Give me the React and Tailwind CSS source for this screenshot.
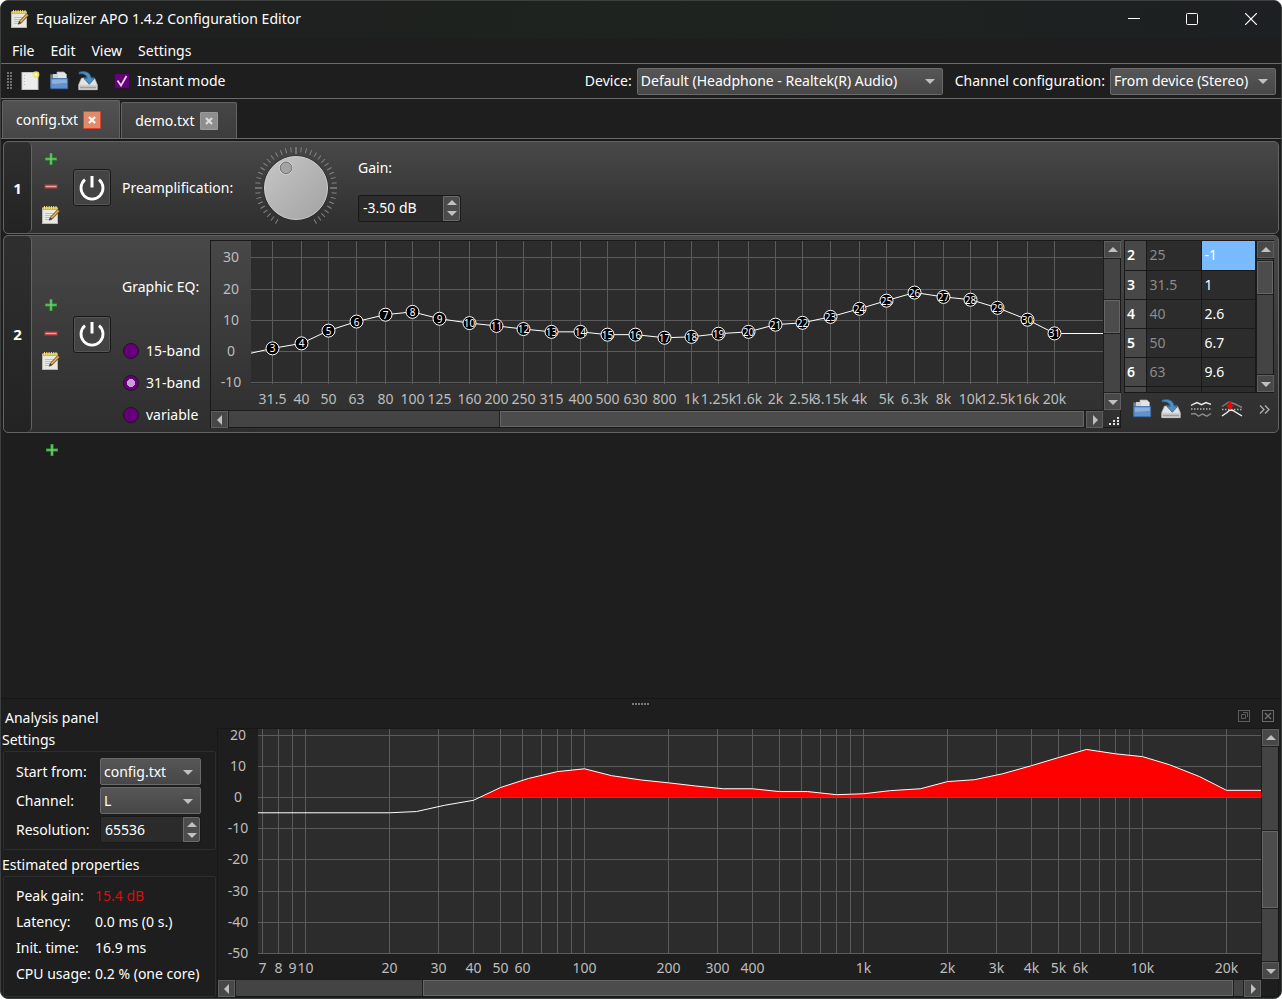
import React, { useState } from 'react';
import clsx from 'clsx';

const BANDS = [
  { n: 1, f: 20, g: -1.4 },
  { n: 2, f: 25, g: -1 },
  { n: 3, f: 31.5, g: 1, label: '31.5' },
  { n: 4, f: 40, g: 2.6, label: '40' },
  { n: 5, f: 50, g: 6.7, label: '50' },
  { n: 6, f: 63, g: 9.6, label: '63' },
  { n: 7, f: 80, g: 11.8, label: '80' },
  { n: 8, f: 100, g: 12.7, label: '100' },
  { n: 9, f: 125, g: 10.5, label: '125' },
  { n: 10, f: 160, g: 9.1, label: '160' },
  { n: 11, f: 200, g: 8.2, label: '200' },
  { n: 12, f: 250, g: 7.2, label: '250' },
  { n: 13, f: 315, g: 6.3, label: '315' },
  { n: 14, f: 400, g: 6.3, label: '400' },
  { n: 15, f: 500, g: 5.4, label: '500' },
  { n: 16, f: 630, g: 5.4, label: '630' },
  { n: 17, f: 800, g: 4.4, label: '800' },
  { n: 18, f: 1000, g: 4.7, label: '1k' },
  { n: 19, f: 1250, g: 5.7, label: '1.25k' },
  { n: 20, f: 1600, g: 6.3, label: '1.6k' },
  { n: 21, f: 2000, g: 8.6, label: '2k' },
  { n: 22, f: 2500, g: 9.2, label: '2.5k' },
  { n: 23, f: 3150, g: 11.1, label: '3.15k' },
  { n: 24, f: 4000, g: 13.7, label: '4k' },
  { n: 25, f: 5000, g: 16.3, label: '5k' },
  { n: 26, f: 6300, g: 18.9, label: '6.3k' },
  { n: 27, f: 8000, g: 17.5, label: '8k' },
  { n: 28, f: 10000, g: 16.6, label: '10k' },
  { n: 29, f: 12500, g: 14, label: '12.5k' },
  { n: 30, f: 16000, g: 10.2, label: '16k' },
  { n: 31, f: 20000, g: 5.8, label: '20k' },
];

const PREAMP = -3.5;

function NotepadIcon() {
  return (
    <svg width="18" height="18" viewBox="0 0 18 18">
      <rect x="0.5" y="2" width="15" height="15.5" fill="#e9e9e4" stroke="#b9b9b2" />
      <path d="M3 7.5h9M3 9.5h8M3 11.5h7M3 13.5h6" stroke="#b4b4b4" strokeWidth="0.8" />
      <rect x="1" y="1" width="14" height="3" fill="#d9b93a" />
      <path d="M2.5 0v3M4.8 0v3M7.1 0v3M9.4 0v3M11.7 0v3M14 0v3" stroke="#f6e27a" strokeWidth="1" />
      <path d="M7.2 14.2 8.4 11.2 15.6 3.6 17.6 5.4 10.3 13z" fill="#c08a3e" stroke="#6b4a1c" strokeWidth="0.7" />
      <path d="M7.2 14.2 8.4 11.2 10.3 13z" fill="#4a3a25" />
      <path d="M9.5 11.8 16.3 4.5" stroke="#ecc27a" strokeWidth="0.9" />
    </svg>
  );
}

function NewFileIcon() {
  return (
    <svg width="20" height="20" viewBox="0 0 20 20">
      <rect x="2" y="1.5" width="16" height="17" fill="#ececec" stroke="#c4c4c4" />
      <path d="M4.5 4v12" stroke="#bdbdbd" strokeDasharray="1 2" />
      <circle cx="16" cy="3.6" r="3.4" fill="#f0e75c" opacity="0.85" />
      <circle cx="16" cy="3.6" r="1.4" fill="#fffbd0" />
    </svg>
  );
}

function FolderIcon() {
  return (
    <svg width="20" height="20" viewBox="0 0 20 20">
      <path d="M1.500 16V3.500h5l1 1.500h9.500v11z" fill="#75808f" stroke="#56606c" strokeWidth="0.8" />
      <path d="M8 1h7l2.500 2.500V9H8z" fill="#e4e4e4" stroke="#a9a9a9" strokeWidth="0.7" />
      <path d="M4 3h5v6H4z" fill="#cfd2d6" />
      <path d="M1.800 17.700V7.600h16.900v10.100z" fill="#6391ca" stroke="#3b6aa8" strokeWidth="0.9" />
      <path d="M2.800 8.600h15v3.400C13 11.500 8 13 2.800 12.800z" fill="#8bb2de" />
    </svg>
  );
}

function SaveIcon() {
  return (
    <svg width="20" height="20" viewBox="0 0 20 20">
      <path d="M3.500 7h13l2.800 6.500v5.200H.7v-5.200z" fill="#e3e3e3" stroke="#a8a8a8" strokeWidth="0.7" />
      <path d="M.8 13.800h18.400v4.900H.8z" fill="#cfcfcf" />
      <path d="M2.500 16.500h15" stroke="#6d6d6d" strokeWidth="1.600" strokeDasharray="1 1" />
      <path d="M1 1.300C6-.5 12.500.5 13.200 7.500h3.300l-5.200 5.800-5.300-5.800h3.200C9 4 5.500 2.200 1 3z" fill="#4f8fc0" stroke="#2a5f8c" strokeWidth="0.8" />
    </svg>
  );
}

function PlusIcon() {
  return (
    <svg width="14" height="14" viewBox="0 0 14 14">
      <path d="M5.500 1h3v4.500H13v3H8.500V13h-3V8.500H1v-3h4.500z" fill="#2f9a33" />
      <path d="M7 1.700v10.600M1.700 7h10.600" stroke="#7fd67c" strokeWidth="1.200" />
    </svg>
  );
}

function MinusIcon() {
  return (
    <svg width="14" height="5" viewBox="0 0 14 5">
      <rect x="0.500" y="0.500" width="13" height="4" fill="#b23c3c" />
      <path d="M1.500 2.500h11" stroke="#eba3a0" strokeWidth="1.400" />
    </svg>
  );
}

function PowerIcon() {
  return (
    <svg width="26" height="26" viewBox="0 0 26 26" fill="none" stroke="#fff" strokeWidth="2.800">
      <path d="M6 4.600a11 11 0 1 0 14 0" />
      <path d="M13 1v11.500" strokeWidth="3" />
    </svg>
  );
}

function CurvesIcon() {
  return (
    <svg width="22" height="18" viewBox="0 0 22 18" fill="none" strokeWidth="1.400">
      <path d="M1 5.500 3.500 4 7 2.500l4.500 2.200L16 2.500l5 1.800" stroke="#f0f0f0" />
      <path d="M1 9h20" stroke="#b0b0b0" strokeDasharray="1.500 1.500" />
      <path d="M1 14 5 13.500l3.500 2.700 4-2.200 4.500 2.200L21 13.500" stroke="#8a8a8a" />
    </svg>
  );
}

function NormalizeIcon() {
  return (
    <svg width="22" height="18" viewBox="0 0 22 18" fill="none" strokeWidth="1.400">
      <path d="M1 6.500 8 2l6 2 7 3.500" stroke="#808080" />
      <path d="M1 9.500h20" stroke="#b0b0b0" strokeDasharray="1.500 1.500" />
      <path d="M1 16 6 12.500l3-2.500 3 .5 4 2.500 5 3" stroke="#f5f5f5" />
      <path d="M7.500 1h3v4h2.500L9 10 5 5h2.500z" fill="#f00" />
    </svg>
  );
}

function Arrow({ dir }) {
  const d = {
    up: 'M0 7 5 2l5 5z',
    down: 'M0 3 5 8l5-5z',
    left: 'M7 0 2 5l5 5z',
    right: 'M3 0 8 5l-5 5z',
  }[dir];
  return (
    <svg width="10" height="10" viewBox="0 0 10 10">
      <path d={d} fill="#c0c0c0" />
    </svg>
  );
}

function ScrollButton({ dir }) {
  return (
    <button
      aria-label={`Scroll ${dir}`}
      className="flex h-[17px] w-[17px] shrink-0 items-center justify-center border border-[#5e5e5e] bg-[#484848]"
    >
      <Arrow dir={dir} />
    </button>
  );
}

function ScrollBar({ vertical, before, thumb, after, className }) {
  const seps = vertical ? 'border-y' : 'border-x';
  return (
    <div className={clsx('flex shrink-0 bg-[#444]', vertical ? 'w-[17px] flex-col border-l border-[#1c1c1c]' : 'h-[17px] border-t border-[#1c1c1c]', className)}>
      <ScrollButton dir={vertical ? 'up' : 'left'} />
      <div className={clsx('flex min-h-0 min-w-0 flex-1 border-[#202020]', vertical ? 'flex-col' : '', seps)}>
        <div style={{ flex: `${before} 1 0` }} />
        <div className={clsx('flex border-[#202020]', seps)} style={{ flex: `${thumb} 1 0` }}>
          <div className="flex-1 border border-[#666] bg-[#4c4c4c]" />
        </div>
        <div style={{ flex: `${after} 1 0` }} />
      </div>
      <ScrollButton dir={vertical ? 'down' : 'right'} />
    </div>
  );
}

function Combo({ id, value, className }) {
  return (
    <div className={clsx('relative h-[27px]', className)}>
      <select
        id={id}
        className="h-full w-full appearance-none rounded-[2px] border border-[#6a6a6a] bg-linear-to-b from-[#565656] to-[#474747] pl-[3px] pr-4 text-sm leading-5 text-white outline-none"
      >
        <option>{value}</option>
      </select>
      <span className="pointer-events-none absolute inset-y-0 right-2 flex items-center">
        <Arrow dir="down" />
      </span>
    </div>
  );
}

function Spin({ id, value, className }) {
  return (
    <div className={clsx('flex h-[27px] rounded-[2px] border border-[#191919] bg-[#2b2b2b]', className)}>
      <input id={id} defaultValue={value} className="min-w-0 flex-1 bg-transparent pl-1 text-sm leading-5 text-white outline-none" />
      <div className="flex w-[17px] flex-col items-center justify-center rounded-r-[2px] border border-[#6a6a6a] bg-[#4c4c4c]">
        <button aria-label="Increase"><Arrow dir="up" /></button>
        <button aria-label="Decrease"><Arrow dir="down" /></button>
      </div>
    </div>
  );
}

function Dial({ value }) {
  const ticks = Array.from({ length: 41 }, (_, i) => i - 20);
  const a = (value * 7.5 * Math.PI) / 180;
  return (
    <svg width="84" height="84" viewBox="-42 -42 84 84" role="img" aria-label="Gain dial">
      <defs>
        <linearGradient id="knob" x1="0" y1="0" x2="1" y2="1">
          <stop offset="0%" stopColor="#c6c6c6" />
          <stop offset="100%" stopColor="#a2a2a2" />
        </linearGradient>
      </defs>
      {ticks.map((t) => (
        <line
          key={t}
          x1="0"
          x2="0"
          y1="-41"
          y2={t % 12 === 0 ? -34 : -36}
          stroke={t % 12 === 0 ? '#a4a4a4' : '#858585'}
          strokeWidth="1"
          transform={`rotate(${t * 7.5})`}
        />
      ))}
      <circle r="33" fill="#2a2a2a" opacity="0.5" />
      <circle r="31.500" fill="url(#knob)" stroke="#d0d0d0" strokeWidth="1" />
      <circle cx={Math.sin(a) * 22.5} cy={-Math.cos(a) * 22.5} r="7" fill="#d8d8d8" />
      <circle cx={Math.sin(a) * 22.5} cy={-Math.cos(a) * 22.5} r="5.800" fill="#a3a3a3" stroke="#6e6e6e" strokeWidth="1" />
    </svg>
  );
}

// One octave is 84px wide and 10dB are 31.2px high in both charts
function EqChart() {
  const x = (f) => Math.round(61 + 84 * Math.log2(f / 31.5)) + 0.5;
  const y = (g) => 110.5 - g * 3.12;
  const last = BANDS[BANDS.length - 1];
  const shown = BANDS.filter((b) => b.label);
  return (
    <svg className="h-[169px] min-w-0 flex-1 overflow-hidden text-sm" fill="#bdbdbd">
      <defs>
        <clipPath id="eqplot">
          <rect x="40" y="0" width="4000" height="143" />
        </clipPath>
      </defs>
      <rect x="40" y="0" width="100%" height="143" fill="#2c2c2c" />
      {[30, 20, 10, 0, -10].map((g) => (
        <g key={g}>
          <line x1="40" x2="100%" y1={Math.floor(y(g)) + 0.5} y2={Math.floor(y(g)) + 0.5} stroke="#5b5b5b" />
          <text x="20" y={Math.floor(y(g)) + 5} textAnchor="middle">{g}</text>
        </g>
      ))}
      {shown.map((b) => (
        <g key={b.n}>
          <line x1={x(b.f)} x2={x(b.f)} y1="0" y2="143" stroke="#5b5b5b" />
          <text x={x(b.f)} y="163" textAnchor="middle">{b.label}</text>
        </g>
      ))}
      <g clipPath="url(#eqplot)">
        <polyline points={BANDS.map((b) => `${x(b.f)},${y(b.g)}`).join(' ')} fill="none" stroke="#fff" />
        <line x1={x(last.f)} x2="100%" y1="92.500" y2="92.500" stroke="#fff" />
        {shown.map((b) => (
          <g key={b.n}>
            <circle cx={x(b.f)} cy={y(b.g)} r="6.500" fill="#000" stroke="#fff" />
            <text x={x(b.f)} y={y(b.g) + 4} textAnchor="middle" fill="#fff" className="text-[10px]">{b.n}</text>
          </g>
        ))}
      </g>
    </svg>
  );
}

const GRID_HZ = [7, 8, 9, ...[10, 100, 1000].flatMap((d) => [1, 2, 3, 4, 5, 6, 7, 8, 9].map((m) => m * d)), 10000, 20000].filter((f) => f < 60 || f > 6);
const HZ_LABELS = { 7: '7', 8: '8', 9: '9', 10: '10', 20: '20', 30: '30', 40: '40', 50: '50', 60: '60', 100: '100', 200: '200', 300: '300', 400: '400', 1000: '1k', 2000: '2k', 3000: '3k', 4000: '4k', 5000: '5k', 6000: '6k', 10000: '10k', 20000: '20k' };

function AnalysisChart() {
  const x = (f) => Math.round(87 + 279 * Math.log10(f / 10)) + 0.5;
  const y = (g) => 68.5 - g * 3.12;
  const pts = BANDS.map((b) => `${x(b.f)},${y(b.g + PREAMP)}`).join(' ');
  const end = y(BANDS[BANDS.length - 1].g + PREAMP);
  const curve = `40,${y(-4.9)} ${pts} 4000,${end}`;
  return (
    <svg className="h-[250px] min-w-0 flex-1 overflow-hidden text-sm" fill="#bdbdbd">
      <defs>
        <clipPath id="above">
          <rect x="40" y="0" width="4000" height="68" />
        </clipPath>
      </defs>
      <rect x="40" y="0" width="100%" height="225" fill="#2c2c2c" />
      {GRID_HZ.map((f) => (
        <line key={f} x1={x(f)} x2={x(f)} y1="0" y2="225" stroke="#5b5b5b" />
      ))}
      {[20, 10, 0, -10, -20, -30, -40, -50].map((g) => (
        <g key={g}>
          <line x1="40" x2="100%" y1={Math.floor(y(g)) + 0.5} y2={Math.floor(y(g)) + 0.5} stroke="#5b5b5b" />
          <text x="20" y={Math.floor(y(g)) + 5} textAnchor="middle">{g}</text>
        </g>
      ))}
      <polygon points={`40,68.500 ${curve} 4000,68.500`} fill="#f00" clipPath="url(#above)" />
      <polyline points={curve} fill="none" stroke="#fff" />
      {Object.entries(HZ_LABELS).map(([f, label]) => (
        <text key={f} x={x(Number(f))} y="244" textAnchor="middle">{label}</text>
      ))}
    </svg>
  );
}

function FilterRow({ n, className, children }) {
  return (
    <section className={clsx('flex rounded-[5px] border border-[#636363] bg-linear-to-b from-[#484848] to-[#2e2e2e]', className)}>
      <div className="flex w-7 shrink-0 items-center justify-center rounded-[5px] border-r border-[#636363] bg-linear-to-b from-[#2f2f2f] to-[#232323] text-[15px] font-bold">
        {n}
      </div>
      <div className="flex w-[38px] shrink-0 flex-col justify-center pb-[2px]">
        <button aria-label="Add filter" className="flex h-7 items-center justify-center"><PlusIcon /></button>
        <button aria-label="Remove filter" className="flex h-7 items-center justify-center"><MinusIcon /></button>
        <button aria-label="Edit text" className="flex h-7 items-center justify-center"><NotepadIcon /></button>
      </div>
      <button
        aria-label="Power"
        className="mx-[3px] flex h-[37px] w-[38px] shrink-0 items-center justify-center self-center rounded-[3px] border border-[#191919] bg-[#434343] shadow-[inset_0_0_0_1px_#555]"
      >
        <PowerIcon />
      </button>
      {children}
    </section>
  );
}

function Tab({ name, active, onSelect }) {
  return (
    <div
      className={clsx(
        'flex items-center gap-[5px] rounded-t-[2px] border border-b-0 border-[#636363] pl-[13px] pr-[18px]',
        active ? 'h-[38px] bg-linear-to-b from-[#525252] to-[#464646]' : 'h-[36px] bg-linear-to-b from-[#464646] to-[#3c3c3c]'
      )}
    >
      <button onClick={onSelect}>{name}</button>
      <button
        aria-label={`Close ${name}`}
        className={clsx('flex h-[18px] w-[18px] items-center justify-center rounded-[1px] border', active ? 'border-[#d9432f] bg-[#e58a68]' : 'border-[#9a9a9a] bg-[#8e8e8e]')}
      >
        <svg width="8" height="8" viewBox="0 0 8 8" stroke={active ? '#fff' : '#dcdcdc'} strokeWidth="2.200">
          <path d="M1 1l6 6M7 1 1 7" />
        </svg>
      </button>
    </div>
  );
}

function BandTable() {
  return (
    <div className="flex h-[153px] border border-[#191919] bg-[#2c2c2c]">
      <div className="h-[151px] min-w-0 flex-1 overflow-hidden">
        <table className="w-full table-fixed border-collapse text-sm leading-5">
          <tbody>
            {BANDS.slice(1, 6).map((b) => (
              <tr key={b.n} className="h-[29px]">
                <th scope="row" className="w-[21px] border-r border-b border-[#191919] bg-[#484848] p-0 pl-[2px] text-left font-semibold">{b.n}</th>
                <td className="w-[55px] border-r border-b border-[#191919] p-0 pl-[3px] text-[#8b8b8b]">{b.f}</td>
                <td className={clsx('border-r border-b border-[#191919] p-0 pl-[3px]', b.n === 2 && 'bg-[#7abaff]')}>{b.g}</td>
              </tr>
            ))}
            <tr className="h-[29px]">
              <th scope="row" className="border-r border-[#191919] bg-[#484848] p-0" />
              <td className="border-r border-[#191919]" />
              <td className="border-r border-[#191919]" />
            </tr>
          </tbody>
        </table>
      </div>
      <ScrollBar vertical before={1} thumb={34} after={80} />
    </div>
  );
}

const PROPS = [
  ['Peak gain:', '15.4 dB', 'text-[#d40f0f]'],
  ['Latency:', '0.0 ms (0 s.)', ''],
  ['Init. time:', '16.9 ms', ''],
  ['CPU usage:', '0.2 % (one core)', ''],
];

export default function App() {
  const [tab, setTab] = useState('config.txt');
  const [mode, setMode] = useState('31-band');
  const [instant, setInstant] = useState(true);

  return (
    <div className="flex min-h-screen flex-col overflow-hidden rounded-lg border border-[#3d3f3e] bg-[#1e1e1e] pb-px font-['Noto_Sans',sans-serif] text-sm leading-5 text-white">
      <header className="flex h-[37px] items-center bg-linear-to-r from-[#1e201f] via-[#1e231f] to-[#1d2022] pb-px pl-[10px]">
        <NotepadIcon />
        <h1 className="ml-[7px] flex-1">Equalizer APO 1.4.2 Configuration Editor</h1>
        <button aria-label="Minimize" className="flex h-full w-[58px] items-center justify-center">
          <svg width="12" height="12" stroke="#fff"><path d="M0 5.500h12" /></svg>
        </button>
        <button aria-label="Maximize" className="flex h-full w-[58px] items-center justify-center">
          <svg width="12" height="12" stroke="#fff" fill="none"><rect x="0.500" y="0.500" width="11" height="11" rx="1" /></svg>
        </button>
        <button aria-label="Close" className="flex h-full w-[60px] items-center justify-center">
          <svg width="12" height="12" stroke="#fff" fill="none" strokeWidth="1.200"><path d="M0 0l12 12M12 0 0 12" /></svg>
        </button>
      </header>

      <nav className="flex h-[26px] items-center gap-4 border-b border-[#6b6b6b] pl-[11px]">
        {['File', 'Edit', 'View', 'Settings'].map((m) => (
          <button key={m}>{m}</button>
        ))}
      </nav>

      <div className="flex h-[35px] items-center border-b border-[#6b6b6b] pr-[5px] pl-[5px]">
        <svg width="8" height="18" viewBox="0 0 8 18" fill="#707070">
          {[0, 3, 6, 9, 12, 15].map((y) => (
            <g key={y}>
              <rect x="1" y={y} width="2" height="2" />
              <rect x="4" y={y} width="2" height="2" />
            </g>
          ))}
        </svg>
        <div className="ml-[6px] flex gap-[9px] pb-px">
          <button aria-label="New"><NewFileIcon /></button>
          <button aria-label="Open"><FolderIcon /></button>
          <button aria-label="Save"><SaveIcon /></button>
        </div>
        <label className="ml-4 flex items-center gap-[7px]">
          <span className="relative flex h-4 w-4">
            <input
              type="checkbox"
              checked={instant}
              onChange={(e) => setInstant(e.target.checked)}
              className="h-4 w-4 appearance-none border border-[#2c0f33] bg-[#66007a]"
            />
            {instant && (
              <svg className="pointer-events-none absolute inset-0" width="16" height="16" fill="none" stroke="#e2d3e6" strokeWidth="1.800">
                <path d="M3.500 7.500 7 12.500 12.500 3" />
              </svg>
            )}
          </span>
          Instant mode
        </label>
        <label htmlFor="device" className="ml-auto">Device:</label>
        <Combo id="device" value="Default (Headphone - Realtek(R) Audio)" className="ml-[5px] w-[306px]" />
        <label htmlFor="channels" className="ml-3">Channel configuration:</label>
        <Combo id="channels" value="From device (Stereo)" className="ml-[5px] w-[166px]" />
      </div>

      <div className="flex h-10 items-end gap-px border-b border-[#6b6b6b] pl-px">
        <Tab name="config.txt" active={tab === 'config.txt'} onSelect={() => setTab('config.txt')} />
        <Tab name="demo.txt" active={tab === 'demo.txt'} onSelect={() => setTab('demo.txt')} />
      </div>

      <main className="flex flex-1 flex-col gap-px border-t-2 border-[#181818] px-[2px]">
        <FilterRow n={1} className="min-h-[93px]">
          <p className="ml-2 w-[132px] self-center">Preamplification:</p>
          <div className="self-center"><Dial value={PREAMP} /></div>
          <div className="ml-5 flex flex-col gap-[17px] self-center pt-1">
            <label htmlFor="gain">Gain:</label>
            <Spin id="gain" value="-3.50 dB" className="w-[103px]" />
          </div>
        </FilterRow>

        <FilterRow n={2} className="min-h-[198px] pr-1">
          <div className="ml-2 w-[88px] shrink-0 pt-[41px]">
            <p className="mb-[38px]">Graphic EQ:</p>
            {['15-band', '31-band', 'variable'].map((m) => (
              <label key={m} className="flex h-8 items-center gap-[7px]">
                <input
                  type="radio"
                  name="bands"
                  checked={mode === m}
                  onChange={() => setMode(m)}
                  className="ml-px h-4 w-4 appearance-none rounded-full border border-[#24102a] bg-[#66007a] checked:bg-[radial-gradient(circle,#c79fd0_4px,#66007a_4px)]"
                />
                {m}
              </label>
            ))}
          </div>
          <div className="mt-1 flex h-[188px] min-w-0 flex-1 flex-col border border-[#191919]">
            <div className="flex h-[169px]">
              <EqChart />
              <ScrollBar vertical before={42} thumb={34} after={60} />
            </div>
            <div className="flex">
              <ScrollBar before={271} thumb={586} after={0} className="flex-1" />
              <svg width="17" height="17" viewBox="0 0 17 17" fill="#e4e4e4">
                <path d="M14 7h2v2h-2zM10 10h2v2h-2zM14 10h2v2h-2zM6 13h2v2H6zM10 13h2v2h-2zM14 13h2v2h-2z" />
              </svg>
            </div>
          </div>
          <div className="mt-1 ml-[3px] w-[150px] shrink-0">
            <BandTable />
            <div className="flex items-center gap-[9px] pt-[6px] pl-2 text-[#b8b8b8]">
              <button aria-label="Import"><FolderIcon /></button>
              <button aria-label="Export"><SaveIcon /></button>
              <button aria-label="Invert response"><CurvesIcon /></button>
              <button aria-label="Normalize response"><NormalizeIcon /></button>
              <button aria-label="More" className="ml-auto pr-1">
                <svg width="11" height="9" viewBox="0 0 11 9" fill="none" stroke="#b0b0b0" strokeWidth="1.300">
                  <path d="M1 .5l4 4-4 4M6 .5l4 4-4 4" />
                </svg>
              </button>
            </div>
          </div>
        </FilterRow>
        <button aria-label="Add filter" className="mt-[2px] ml-[35px] flex h-7 w-7 items-center justify-center"><PlusIcon /></button>
      </main>

      <aside className="border-t border-[#161616] pr-[2px]">
        <div className="flex h-[9px] items-center justify-center gap-px">
          {[0, 1, 2, 3, 4, 5].map((i) => (
            <span key={i} className="h-[2px] w-[2px] bg-[#7a7a7a]" />
          ))}
        </div>
        <div className="flex h-5 items-center pr-[5px] pl-1">
          <h2 className="flex-1">Analysis panel</h2>
          <button aria-label="Float" className="mr-3 pb-1">
            <svg width="12" height="12" fill="none" stroke="#5e5e5e"><rect x="0.500" y="0.500" width="11" height="11" /><path d="M3.500 4.500h4v4h-4zM5 2.500h4.500V7" /></svg>
          </button>
          <button aria-label="Close panel" className="pb-1">
            <svg width="12" height="12" fill="none" stroke="#6c6c6c"><rect x="0.500" y="0.500" width="11" height="11" /><path d="M3 3l6 6M9 3 3 9" strokeWidth="1.500" /></svg>
          </button>
        </div>
        <div className="flex">
          <div className="w-[216px] shrink-0 pt-[2px] pr-px">
            <h3 className="pl-px">Settings</h3>
            <div className="mt-px ml-[2px] flex h-[99px] flex-col gap-[2px] rounded-[2px] border border-[#2d2d2d] pt-[6px] pl-3">
              <div className="flex items-center">
                <label htmlFor="start" className="w-[84px]">Start from:</label>
                <Combo id="start" value="config.txt" className="w-[101px]" />
              </div>
              <div className="flex items-center">
                <label htmlFor="channel" className="w-[84px]">Channel:</label>
                <Combo id="channel" value="L" className="w-[101px]" />
              </div>
              <div className="flex items-center">
                <label htmlFor="resolution" className="w-[84px]">Resolution:</label>
                <Spin id="resolution" value="65536" className="w-[101px]" />
              </div>
            </div>
            <h3 className="mt-[5px] pl-px">Estimated properties</h3>
            <dl className="mt-px ml-[2px] h-[121px] rounded-[2px] border border-[#2d2d2d] pt-[6px] pl-3">
              {PROPS.map(([k, v, color]) => (
                <div key={k} className="flex h-[26px] items-center whitespace-nowrap">
                  <dt className="w-[79px]">{k}</dt>
                  <dd className={color}>{v}</dd>
                </div>
              ))}
            </dl>
          </div>
          <div className="flex min-w-0 flex-1 flex-col border border-[#171717]">
            <div className="flex h-[250px]">
              <AnalysisChart />
              <ScrollBar vertical before={85} thumb={79} after={53} />
            </div>
            <div className="flex pr-[17px]">
              <ScrollBar before={187} thumb={812} after={9} className="flex-1" />
            </div>
          </div>
        </div>
      </aside>
    </div>
  );
}
